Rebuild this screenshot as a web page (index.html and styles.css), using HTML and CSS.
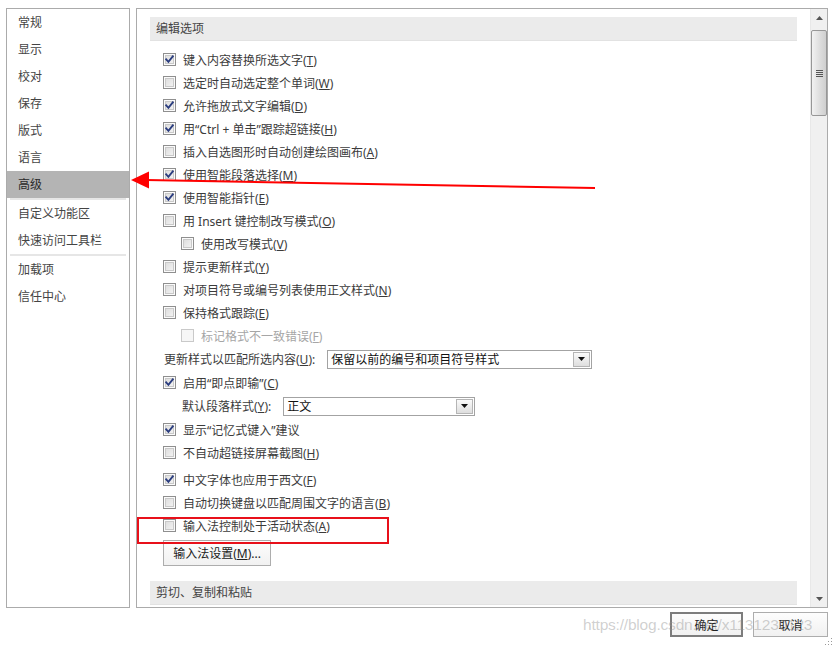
FILE: index.html
```html
<!DOCTYPE html>
<html>
<head>
  <title>Word 选项 - 高级</title>
  <link rel="stylesheet" href="styles.css">
</head>
<body>
  <div class="dialog">
    <div class="panes">
      <nav class="side">
        <div class="side-item">常规</div>
        <div class="side-item">显示</div>
        <div class="side-item">校对</div>
        <div class="side-item">保存</div>
        <div class="side-item">版式</div>
        <div class="side-item">语言</div>
        <div class="side-item active">高级</div>
        <div class="side-sep"></div>
        <div class="side-item">自定义功能区</div>
        <div class="side-item">快速访问工具栏</div>
        <div class="side-sep"></div>
        <div class="side-item">加载项</div>
        <div class="side-item">信任中心</div>
      </nav>

      <div class="main">
        <div class="content">
          <div class="section-head">编辑选项</div>

          <div class="rows">
            <label class="row"><span class="cb checked"><svg viewBox="0 0 11 11"><path d="M2.2 5.4 L4.4 7.8 L8.8 2.4"/></svg></span><span>键入内容替换所选文字(<u>T</u>)</span></label>
            <label class="row"><span class="cb"></span><span>选定时自动选定整个单词(<u>W</u>)</span></label>
            <label class="row"><span class="cb checked"><svg viewBox="0 0 11 11"><path d="M2.2 5.4 L4.4 7.8 L8.8 2.4"/></svg></span><span>允许拖放式文字编辑(<u>D</u>)</span></label>
            <label class="row"><span class="cb checked"><svg viewBox="0 0 11 11"><path d="M2.2 5.4 L4.4 7.8 L8.8 2.4"/></svg></span><span>用“Ctrl + 单击”跟踪超链接(<u>H</u>)</span></label>
            <label class="row"><span class="cb"></span><span>插入自选图形时自动创建绘图画布(<u>A</u>)</span></label>
            <label class="row"><span class="cb checked"><svg viewBox="0 0 11 11"><path d="M2.2 5.4 L4.4 7.8 L8.8 2.4"/></svg></span><span>使用智能段落选择(<u>M</u>)</span></label>
            <label class="row"><span class="cb checked"><svg viewBox="0 0 11 11"><path d="M2.2 5.4 L4.4 7.8 L8.8 2.4"/></svg></span><span>使用智能指针(<u>E</u>)</span></label>
            <label class="row"><span class="cb"></span><span>用 Insert 键控制改写模式(<u>O</u>)</span></label>
            <label class="row indent"><span class="cb"></span><span>使用改写模式(<u>V</u>)</span></label>
            <label class="row"><span class="cb"></span><span>提示更新样式(<u>Y</u>)</span></label>
            <label class="row"><span class="cb"></span><span>对项目符号或编号列表使用正文样式(<u>N</u>)</span></label>
            <label class="row"><span class="cb"></span><span>保持格式跟踪(<u>E</u>)</span></label>
            <label class="row indent disabled"><span class="cb"></span><span>标记格式不一致错误(<u>F</u>)</span></label>

            <div class="row field">
              <span class="field-label">更新样式以匹配所选内容(<u>U</u>):</span>
              <div class="select select-wide">
                <span class="select-value">保留以前的编号和项目符号样式</span>
                <span class="select-btn"><svg viewBox="0 0 7 4"><path d="M0 0 H7 L3.5 4 Z"/></svg></span>
              </div>
            </div>

            <label class="row"><span class="cb checked"><svg viewBox="0 0 11 11"><path d="M2.2 5.4 L4.4 7.8 L8.8 2.4"/></svg></span><span>启用“即点即输”(<u>C</u>)</span></label>

            <div class="row field indent">
              <span class="field-label">默认段落样式(<u>Y</u>):</span>
              <div class="select select-narrow">
                <span class="select-value">正文</span>
                <span class="select-btn"><svg viewBox="0 0 7 4"><path d="M0 0 H7 L3.5 4 Z"/></svg></span>
              </div>
            </div>

            <label class="row"><span class="cb checked"><svg viewBox="0 0 11 11"><path d="M2.2 5.4 L4.4 7.8 L8.8 2.4"/></svg></span><span>显示“记忆式键入”建议</span></label>
            <label class="row"><span class="cb"></span><span>不自动超链接屏幕截图(<u>H</u>)</span></label>
            <label class="row spaced"><span class="cb checked"><svg viewBox="0 0 11 11"><path d="M2.2 5.4 L4.4 7.8 L8.8 2.4"/></svg></span><span>中文字体也应用于西文(<u>F</u>)</span></label>
            <label class="row"><span class="cb"></span><span>自动切换键盘以匹配周围文字的语言(<u>B</u>)</span></label>
            <label class="row"><span class="cb"></span><span>输入法控制处于活动状态(<u>A</u>)</span></label>

            <button class="btn ime-btn">输入法设置(<u>M</u>)...</button>
          </div>

          <div class="section-head section-next">剪切、复制和粘贴</div>
        </div>

        <div class="scrollbar">
          <div class="scroll-arrow"><svg viewBox="0 0 7 4"><path d="M0 4 H7 L3.5 0 Z"/></svg></div>
          <div class="scroll-thumb">
            <span class="grip"></span>
          </div>
          <div class="scroll-track"></div>
          <div class="scroll-arrow"><svg viewBox="0 0 7 4"><path d="M0 0 H7 L3.5 4 Z"/></svg></div>
        </div>
      </div>
    </div>

    <div class="actions">
      <button class="btn action default">确定</button>
      <button class="btn action">取消</button>
    </div>

    <!-- annotations drawn over the dialog -->
    <svg class="arrow" width="834" height="647" viewBox="0 0 834 647">
      <path d="M595 188 L146 180" stroke="#f00" stroke-width="2" fill="none"/>
      <path d="M131 180 L149 171.5 L149 188.5 Z" fill="#f00"/>
    </svg>
    <div class="highlight-box"></div>
    <div class="watermark">https://blog.csdn.net/x1131230123</div>
    <svg class="grip-corner" width="8" height="8" viewBox="0 0 8 8">
      <rect x="6" y="0" width="1" height="1"/>
      <rect x="3" y="3" width="1" height="1"/><rect x="6" y="3" width="1" height="1"/>
      <rect x="0" y="6" width="1" height="1"/><rect x="3" y="6" width="1" height="1"/><rect x="6" y="6" width="1" height="1"/>
    </svg>
  </div>
</body>
</html>
```

FILE: styles.css
```css
* {
  margin: 0;
  padding: 0;
  box-sizing: border-box;
}

body {
  font-family: "Noto Sans", "Noto Sans CJK SC", sans-serif;
  font-size: 12px;
  color: #3b3b3b;
  background: #fff;
  width: 834px;
  height: 647px;
  overflow: hidden;
}

.dialog {
  position: relative;
  width: 834px;
  height: 647px;
  padding: 8px 6px 0 6px;
}

.panes {
  display: flex;
  gap: 6px;
  height: 600px;
}

/* Left navigation */
.side {
  width: 124px;
  border: 1px solid #ababab;
  display: flex;
  flex-direction: column;
}

.side-item {
  height: 27px;
  line-height: 27px;
  padding-left: 11px;
  color: #444;
}

.side-item.active {
  background: #b4b4b4;
  color: #2a2a2a;
}

.side-sep {
  height: 2px;
  margin: 0 3px;
  background: #e6e6e6;
}

/* Main panel */
.main {
  flex: 1;
  display: flex;
  border: 1px solid #ababab;
  overflow: hidden;
}

.content {
  flex: 1;
  padding: 8px 13px 0 13px;
  overflow: hidden;
}

.section-head {
  height: 24px;
  line-height: 23px;
  padding-left: 6px;
  background: #ebebeb;
  border-bottom: 1px solid #e2e2e2;
  color: #444;
}

.section-next {
  margin-top: 15px;
}

.rows {
  display: flex;
  flex-direction: column;
  align-items: flex-start;
  padding-top: 7px;
}

.row {
  display: flex;
  align-items: center;
  height: 23px;
  padding-left: 13px;
  gap: 7px;
  white-space: nowrap;
  color: #3b3b3b;
}

.row.indent {
  padding-left: 31px;
}

.row.spaced {
  margin-top: 4px;
}

.row.disabled {
  color: #a6a6a6;
}

u {
  text-decoration: underline;
  text-underline-offset: 1px;
}

/* Checkboxes */
.cb {
  flex: none;
  width: 13px;
  height: 13px;
  border: 1px solid #8f8f8f;
  background: linear-gradient(135deg, #d9d9d9, #f7f7f7);
  box-shadow: inset 0 0 0 1px #fbfbfb, inset 0 0 0 2px #c9c9c9;
  position: relative;
}

.cb svg {
  position: absolute;
  left: 0;
  top: 0;
  width: 11px;
  height: 11px;
}

.cb svg path {
  fill: none;
  stroke: #2b3d7f;
  stroke-width: 1.9;
  stroke-linecap: square;
}

.disabled .cb {
  border-color: #c9c9c9;
  background: #f6f6f6;
  box-shadow: none;
}

/* Dropdown fields */
.row.field {
  height: 24px;
  padding-left: 14px;
  gap: 0;
}

.row.field.indent {
  padding-left: 32px;
}

.field-label {
  margin-right: 12px;
}

.select {
  display: flex;
  height: 19px;
  border: 1px solid #a3a3a3;
  background: #fff;
  padding: 1px;
}

.select-wide {
  width: 265px;
}

.select-narrow {
  width: 192px;
}

.select-value {
  flex: 1;
  line-height: 15px;
  padding-left: 2px;
  color: #111;
  font-size: 12px;
}

.select-btn {
  width: 17px;
  border: 1px solid #b5b5b5;
  background: linear-gradient(#fafafa, #dedede);
  display: flex;
  align-items: center;
  justify-content: center;
}

.select-btn svg {
  width: 7px;
  height: 4px;
  fill: #111;
}

/* Buttons */
.btn {
  font-family: inherit;
  font-size: 12px;
  color: #222;
  background: linear-gradient(#fdfdfd, #f1f1f1);
  border: 1px solid #adadad;
  cursor: pointer;
}

.ime-btn {
  margin-top: 3px;
  margin-left: 13px;
  width: 108px;
  height: 26px;
}

.actions {
  display: flex;
  justify-content: flex-end;
  gap: 10px;
  margin-top: 4px;
}

.action {
  width: 75px;
  height: 25px;
}

.action.default {
  width: 73px;
  border: 2px solid #7d7d7d;
}

/* Scrollbar */
.scrollbar {
  width: 17px;
  display: flex;
  flex-direction: column;
  background: #f0f0f0;
  border-left: 1px solid #e8e8e8;
}

.scroll-arrow {
  height: 17px;
  display: flex;
  align-items: center;
  justify-content: center;
}

.scroll-arrow svg {
  width: 7px;
  height: 4px;
  fill: #555;
}

.scroll-thumb {
  height: 86px;
  margin: 4px 0 0 0;
  border: 1px solid #979797;
  border-radius: 2px;
  background: linear-gradient(90deg, #f2f2f2, #dcdcdc 60%, #cfcfcf);
  display: flex;
  align-items: center;
  justify-content: center;
}

.grip {
  width: 7px;
  height: 7px;
  background: repeating-linear-gradient(#555 0 1px, transparent 1px 2px);
}

.scroll-track {
  flex: 1;
}

/* Overlays */
.arrow {
  position: absolute;
  left: 0;
  top: 0;
  pointer-events: none;
}

.highlight-box {
  position: absolute;
  left: 137px;
  top: 517px;
  width: 252px;
  height: 27px;
  border: 2px solid #e8101a;
}

.watermark {
  position: absolute;
  left: 583px;
  top: 616px;
  font-family: "Liberation Sans", Arial, sans-serif;
  font-size: 15.5px;
  color: rgba(150, 150, 150, 0.45);
  letter-spacing: -0.2px;
  pointer-events: none;
}

.grip-corner {
  position: absolute;
  right: 1px;
  bottom: 1px;
  fill: #9a9a9a;
}
```
